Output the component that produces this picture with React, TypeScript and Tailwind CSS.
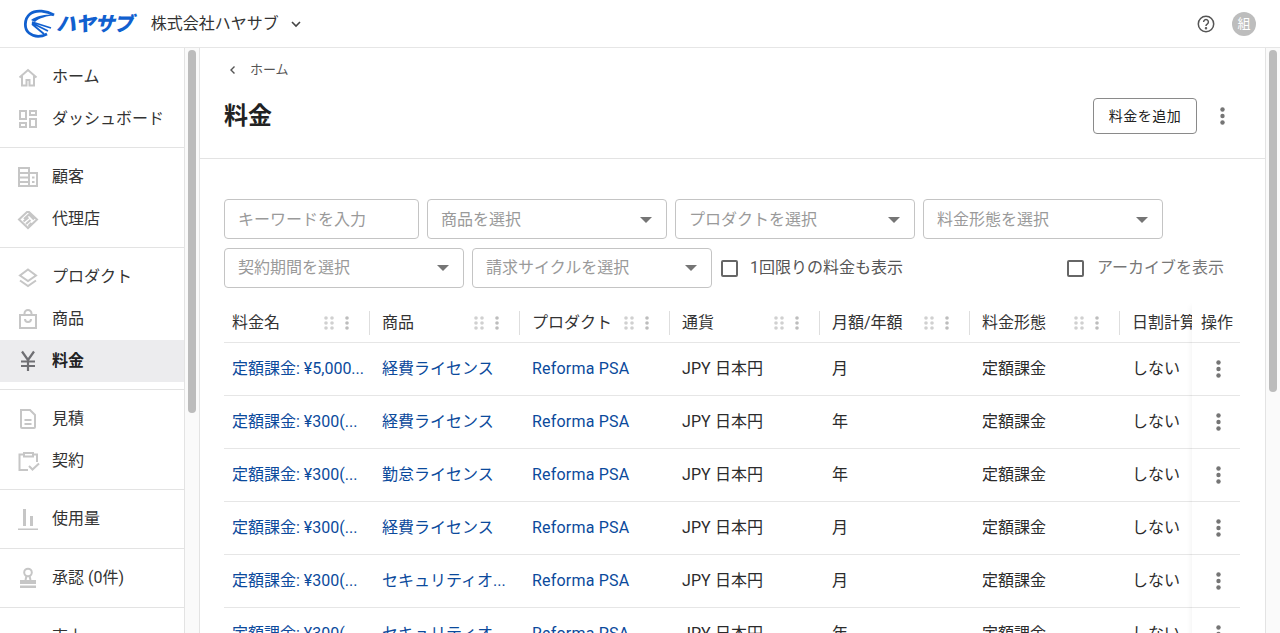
import React from "react";

const font = "font-['Roboto','Noto_Sans_CJK_JP',sans-serif]";

function Ic({ children }: { children: React.ReactNode }) {
  return (
    <svg width="24" height="24" viewBox="0 0 24 24" fill="none" stroke="#c6c6c6" strokeWidth="2" className="shrink-0">
      {children}
    </svg>
  );
}

const icons: Record<string, React.ReactNode> = {
  home: <Ic><path d="M3.5 12.5 12 5l8.5 7.5M6 11v9.5h4.5V15h3v5.5H18V11" /></Ic>,
  dash: <Ic><path d="M4 4h6v8H4zM14 4h6v4h-6zM14 12h6v8h-6zM4 16h6v4H4z" /></Ic>,
  cust: <Ic><path d="M3 3h10v18H3zM13 8h8v13h-8zM3 8h10M3 12.500h10M3 17h10M16 12.500h2.500M16 17h2.500" /></Ic>,
  agent: <Ic><path d="M3 12.500 11 5h2l8 7.500-9 8.500zM8 12l5-4.500 5 5M7.500 14.500l5-4M10 17l4.500-4M12.500 19l3-3" /></Ic>,
  prod: <Ic><path d="m12 4.500 8 6-8 5.500-8-5.500zM4 15.500l8 5.500 8-5.500" /></Ic>,
  item: <Ic><path d="M4 8h16v13H4zM8.500 8V6.500a3.500 3.500 0 0 1 7 0V8M9 12a3 3 0 0 0 6 0" /></Ic>,
  yen: <svg width="24" height="24" viewBox="0 0 24 24" fill="none" stroke="#6f6f73" strokeWidth="2.2" className="shrink-0"><path d="m6 2.500 6 8.500 6-8.500M12 11v11M5 12.500h14M5 17h14" /></svg>,
  est: <Ic><path d="M5 3h9l5 5v12a1 1 0 0 1-1 1H6a1 1 0 0 1-1-1zM8.500 13h7M8.500 17h7" /></Ic>,
  cont: <Ic><path d="M8 5.500H3.500V21H12M17 5.500h4V13M8 4h9v3.500H8zM13 17l3.500 3.500L23 14.500" /></Ic>,
  use: (
    <svg width="24" height="24" viewBox="0 0 24 24" className="shrink-0" fill="#c6c6c6">
      <path d="M7 2h3v17H7zM14 9h3v10h-3zM2 21.500h20V23H2z" />
    </svg>
  ),
  appr: (
    <svg width="24" height="24" viewBox="0 0 24 24" className="shrink-0" fill="none">
      <circle cx="12" cy="6.500" r="3.800" stroke="#c6c6c6" strokeWidth="2" />
      <path d="M10.500 10 9.500 14M13.500 10l1 4" stroke="#c6c6c6" strokeWidth="2" />
      <path d="M4 14h16v4H4zM4 19.500h16V22H4z" fill="#c6c6c6" />
    </svg>
  ),
  sales: <Ic><path d="m4 18 7-7 4 4 6-6" /></Ic>,
};

function NavItem({ icon, label, active }: { icon: string; label: string; active?: boolean }) {
  return (
    <div className={`flex h-[42px] items-center gap-[12px] pl-[16px] text-[16px] ${active ? "bg-[#ececee] font-bold text-[#222]" : "text-[#333]"}`}>
      <span className="flex w-[24px] justify-center">{icons[icon]}</span>
      <span>{label}</span>
    </div>
  );
}

function NavGroup({ items, last, tall }: { items: [string, string, boolean?][]; last?: boolean; tall?: boolean }) {
  return (
    <div className={`pt-[7.5px] ${tall ? "pb-[8.5px]" : "pb-[7.5px]"} ${last ? "" : "border-b border-[#e3e3e3]"}`}>
      {items.map(([i, l, a]) => (
        <NavItem key={l} icon={i} label={l} active={a} />
      ))}
    </div>
  );
}

function Caret() {
  return <span className="h-0 w-0 border-x-[6px] border-t-[6px] border-x-transparent border-t-[#757575]" />;
}

function Select({ label, w }: { label: string; w: string }) {
  return (
    <div className={`flex h-[40px] items-center justify-between rounded-[4px] border border-[#c4c4c4] pl-[13px] pr-[14px] text-[16px] text-[#9a9a9a] ${w}`}>
      <span>{label}</span>
      <Caret />
    </div>
  );
}

function Kebab({ color = "#757575" }: { color?: string }) {
  return (
    <svg width="5" height="18" viewBox="0 0 5 18" fill={color}>
      <circle cx="2.500" cy="2.500" r="2.200" />
      <circle cx="2.500" cy="9" r="2.200" />
      <circle cx="2.500" cy="15.500" r="2.200" />
    </svg>
  );
}

function Handles() {
  return (
    <span className="ml-auto mr-[20px] flex items-center gap-[11px]">
      <svg width="10" height="14" viewBox="0 0 10 14" fill="#d0d0d0">
        {[2, 7, 12].map((y) => (
          <g key={y}>
            <circle cx="2" cy={y} r="1.800" />
            <circle cx="8" cy={y} r="1.800" />
          </g>
        ))}
      </svg>
      <svg width="4" height="14" viewBox="0 0 4 14" fill="#bdbdbd">
        <circle cx="2" cy="2" r="1.800" />
        <circle cx="2" cy="7" r="1.800" />
        <circle cx="2" cy="12" r="1.800" />
      </svg>
    </span>
  );
}

function Checkbox({ label, cls, gap }: { label: string; cls: string; gap: string }) {
  return (
    <div className={`flex items-center text-[16px] ${gap} ${cls}`}>
      <span className="h-[17px] w-[17px] rounded-[2px] border-2 border-[#666]" />
      <span>{label}</span>
    </div>
  );
}

const cols = ["料金名", "商品", "プロダクト", "通貨", "月額/年額", "料金形態", "日割計算"];
const rows = [
  ["定額課金: ¥5,000...", "経費ライセンス", "月"],
  ["定額課金: ¥300(...", "経費ライセンス", "年"],
  ["定額課金: ¥300(...", "勤怠ライセンス", "年"],
  ["定額課金: ¥300(...", "経費ライセンス", "月"],
  ["定額課金: ¥300(...", "セキュリティオ...", "月"],
  ["定額課金: ¥300(...", "セキュリティオ...", "年"],
];

const cell = "w-[150px] shrink-0 pl-[8px] truncate";
const link = "text-[#0b4a9c]";

function Row({ r }: { r: string[] }) {
  return (
    <div className="flex h-[53px] shrink-0 items-center border-b border-[#e6e6e6] text-[16px] text-[#2b2b2b]">
      <div className={`${cell} ${link}`}>{r[0]}</div>
      <div className={`${cell} ${link}`}>{r[1]}</div>
      <div className={`${cell} ${link} tracking-[0.2px]`}>Reforma PSA</div>
      <div className={`${cell} tracking-[0.1px]`}>JPY 日本円</div>
      <div className={cell}>{r[2]}</div>
      <div className={cell}>定額課金</div>
      <div className={cell}>しない</div>
    </div>
  );
}

function Logo() {
  return (
    <div className="flex items-center">
      <svg width="32" height="30" viewBox="0 0 32 30" fill="none" className="shrink-0">
        <path d="M31 6C24 2 13 0 7 5 1 10 1 20 6 24c5 4 12 4 18 1" stroke="#1160cf" strokeWidth="2.800" />
        <path d="M8 11c6-5 16-6 24-5-8 1-16 3-20 7z" fill="#1160cf" />
        <path d="M9 13l19 6M9 14l16 8M9 15l12 10" stroke="#1160cf" strokeWidth="1.800" />
      </svg>
      <span className="ml-[1px] text-[20px] leading-none font-black tracking-[-0.8px] text-[#1160cf] italic">ハヤサブ</span>
    </div>
  );
}

export default function App() {
  return (
    <div className={`flex h-[633px] w-[1280px] flex-col overflow-hidden bg-white ${font}`}>
      <header className="flex h-[48px] shrink-0 items-center border-b border-[#e6e6e6] pl-[23px] pr-[24px]">
        <Logo />
        <span className="ml-[18px] text-[16px] text-[#333]">株式会社ハヤサブ</span>
        <svg width="12" height="8" viewBox="0 0 12 8" fill="none" stroke="#444" strokeWidth="1.600" className="ml-[11px]">
          <path d="m2 2 4 4 4-4" />
        </svg>
        <div className="ml-auto flex items-center gap-[16px]">
          <svg width="20" height="20" viewBox="0 0 20 20" fill="none" stroke="#555" strokeWidth="1.500">
            <circle cx="10" cy="10" r="7.700" />
            <path d="M7.600 8a2.400 2.400 0 1 1 3.600 2.100c-.8.500-1.200 1-1.200 1.900" />
            <circle cx="10" cy="14.300" r=".5" fill="#555" />
          </svg>
          <span className="flex h-[24px] w-[24px] items-center justify-center rounded-full bg-[#bdbdbd] text-[13px] text-white">組</span>
        </div>
      </header>
      <div className="flex min-h-0 flex-1">
        <nav className="w-[185px] shrink-0 overflow-hidden border-r border-[#e3e3e3]">
          <NavGroup items={[["home", "ホーム"], ["dash", "ダッシュボード"]]} />
          <NavGroup items={[["cust", "顧客"], ["agent", "代理店"]]} />
          <NavGroup items={[["prod", "プロダクト"], ["item", "商品"], ["yen", "料金", true]]} />
          <NavGroup items={[["est", "見積"], ["cont", "契約"]]} />
          <NavGroup tall items={[["use", "使用量"]]} />
          <NavGroup tall items={[["appr", "承認 (0件)"]]} />
          <NavGroup last items={[["sales", "売上"]]} />
        </nav>
        <div className="w-[15px] shrink-0 border-r border-[#e3e3e3] bg-[#fafafa] pl-[3px] pt-[2px]">
          <div className="h-[363px] w-[8px] rounded-[4px] bg-[#bcbcbc]" />
        </div>
        <main className="flex min-w-0 flex-1 flex-col">
          <div className="h-[111px] shrink-0 border-b border-[#e3e3e3] pl-[24px] pr-[40px]">
            <div className="flex h-[43px] items-center pt-[1px] text-[13px] text-[#555]">
              <svg width="8" height="10" viewBox="0 0 8 10" fill="none" stroke="#555" strokeWidth="1.400" className="ml-[5px] mr-[13px]">
                <path d="M5.500 1.500 2 5l3.500 3.500" />
              </svg>
              ホーム
            </div>
            <div className="flex h-[50px] items-center justify-between">
              <h1 className="text-[24px] font-bold text-[#222]">料金</h1>
              <div className="flex items-center gap-[23px]">
                <button className="h-[36px] w-[104px] rounded-[4px] border border-[#8a8a8a] text-[14px] tracking-[0.5px] text-[#222]">料金を追加</button>
                <Kebab />
              </div>
            </div>
          </div>
          <div className="flex flex-col pl-[24px] pt-[40px]">
            <div className="flex gap-[8px] [&>div]:pt-[1px]">
              <div className="flex h-[40px] w-[195px] items-center rounded-[4px] border border-[#c4c4c4] pl-[13px] text-[16px] text-[#9a9a9a]">キーワードを入力</div>
              <Select label="商品を選択" w="w-[240px]" />
              <Select label="プロダクトを選択" w="w-[240px]" />
              <Select label="料金形態を選択" w="w-[240px]" />
            </div>
            <div className="mt-[9px] flex w-[1000px] items-center gap-[8px]">
              <Select label="契約期間を選択" w="w-[240px]" />
              <Select label="請求サイクルを選択" w="w-[240px]" />
              <Checkbox label="1回限りの料金も表示" gap="gap-[12px]" cls="ml-[1px] text-[#555]" />
              <Checkbox label="アーカイブを表示" gap="gap-[13px]" cls="ml-auto text-[#777]" />
            </div>
            <div className="relative mt-[15px] w-[1016px] overflow-hidden">
              <div className="flex h-[40px] items-center border-b border-[#e6e6e6] text-[16px] text-[#333]">
                {cols.map((c, i) => (
                  <div key={c} className="flex h-[24px] w-[150px] shrink-0 items-center pl-[8px] pr-[4px]">
                    <span className="whitespace-nowrap">{c}</span>
                    {i < 6 && <Handles />}
                    {i < 6 && <span className="h-[24px] w-[1px] bg-[#dedede]" />}
                  </div>
                ))}
              </div>
              {rows.map((r, i) => (
                <Row key={i} r={r} />
              ))}
              <div className="absolute right-0 top-0 bottom-0 flex w-[48px] flex-col bg-white shadow-[-4px_0_6px_-3px_rgba(0,0,0,0.05)]">
                <div className="flex h-[40px] items-center border-b border-[#e6e6e6] pl-[9px] text-[16px] text-[#333]">操作</div>
                {rows.map((_, i) => (
                  <div key={i} className="flex h-[53px] shrink-0 items-center border-b border-[#e6e6e6] pl-[24px]">
                    <Kebab />
                  </div>
                ))}
              </div>
            </div>
          </div>
        </main>
        <div className="w-[15px] shrink-0 border-l border-[#e3e3e3] bg-[#fafafa] pl-[3px] pt-[2px]">
          <div className="h-[342px] w-[8px] rounded-[4px] bg-[#bcbcbc]" />
        </div>
      </div>
    </div>
  );
}
